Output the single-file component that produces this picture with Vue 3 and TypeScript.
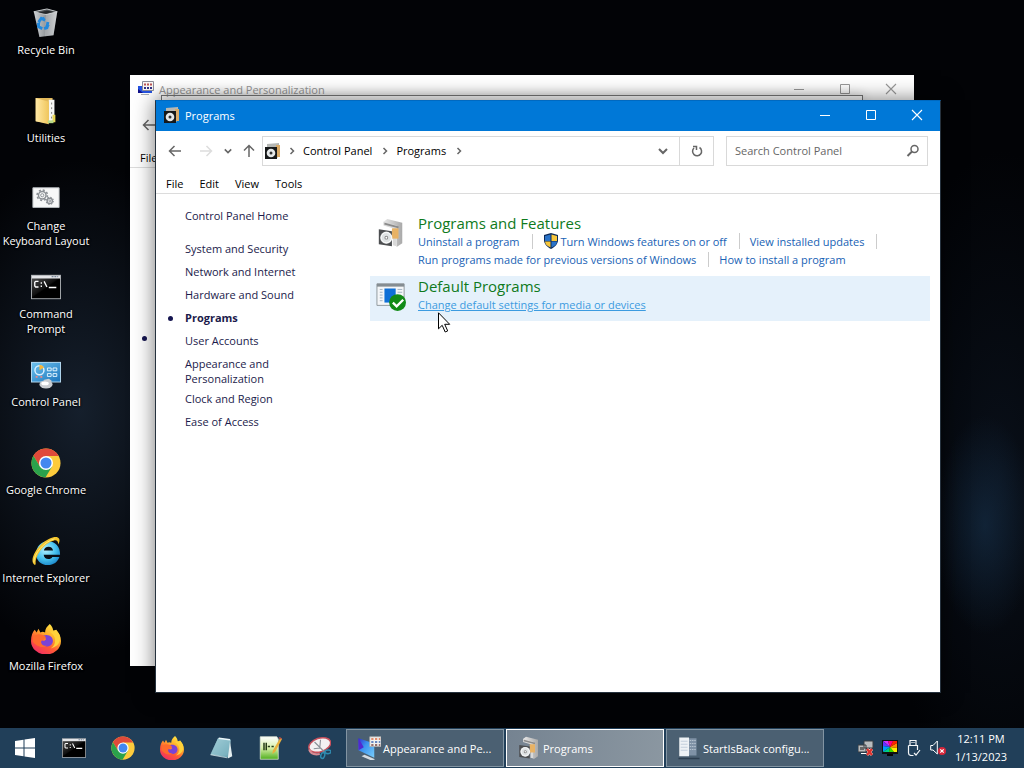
<script setup lang="ts">
import { ref } from 'vue'

interface Shortcut { icon: string; label: string }
interface TaskLink { text: string; shield?: boolean; hot?: boolean }
interface Category { icon: string; title: string; rows: TaskLink[][]; hot?: boolean }
interface SideItem { text: string; current?: boolean; wide?: boolean }

const shortcuts: Shortcut[] = [
  { icon: 'bin', label: 'Recycle Bin' },
  { icon: 'folder', label: 'Utilities' },
  { icon: 'gears', label: 'Change\nKeyboard Layout' },
  { icon: 'cmd', label: 'Command\nPrompt' },
  { icon: 'panel', label: 'Control Panel' },
  { icon: 'chrome', label: 'Google Chrome' },
  { icon: 'ie', label: 'Internet Explorer' },
  { icon: 'firefox', label: 'Mozilla Firefox' },
]

const menus: string[] = ['File', 'Edit', 'View', 'Tools']

const sideItems: SideItem[] = [
  { text: 'System and Security' },
  { text: 'Network and Internet' },
  { text: 'Hardware and Sound' },
  { text: 'Programs', current: true },
  { text: 'User Accounts' },
  { text: 'Appearance and Personalization', wide: true },
  { text: 'Clock and Region' },
  { text: 'Ease of Access' },
]

const categories: Category[] = [
  {
    icon: 'box',
    title: 'Programs and Features',
    rows: [
      [
        { text: 'Uninstall a program' },
        { text: 'Turn Windows features on or off', shield: true },
        { text: 'View installed updates' },
      ],
      [
        { text: 'Run programs made for previous versions of Windows' },
        { text: 'How to install a program' },
      ],
    ],
  },
  {
    icon: 'defaults',
    title: 'Default Programs',
    hot: true,
    rows: [[{ text: 'Change default settings for media or devices', hot: true }]],
  },
]

const pinned: Shortcut[] = [
  { icon: 'cmd', label: 'Command Prompt' },
  { icon: 'chrome', label: 'Google Chrome' },
  { icon: 'firefox', label: 'Mozilla Firefox' },
  { icon: 'notepad', label: 'Notepad' },
  { icon: 'npp', label: 'Notepad++' },
  { icon: 'snip', label: 'Snipping Tool' },
]

const tasks: Shortcut[] = [
  { icon: 'personal', label: 'Appearance and Pe...' },
  { icon: 'box', label: 'Programs' },
  { icon: 'server', label: 'StartIsBack configu...' },
]
const activeTask = ref('Programs')

const tray: Shortcut[] = [
  { icon: 'net', label: 'Network' },
  { icon: 'color', label: 'Display' },
  { icon: 'usb', label: 'Safely remove hardware' },
  { icon: 'mute', label: 'Volume' },
]

const query = ref('')
</script>

<template>
  <div class="desktop">
    <svg class="defs" aria-hidden="true">
      <defs>
        <linearGradient id="gBin" x1="0" x2="1"><stop offset="0" stop-color="#cfd2d5" /><stop offset=".55" stop-color="#8e9397" /><stop offset="1" stop-color="#c3c6c9" /></linearGradient>
        <linearGradient id="gFold" x1="0" x2="1"><stop offset="0" stop-color="#ffe9a6" /><stop offset="1" stop-color="#f0c65c" /></linearGradient>
        <linearGradient id="gCmd" x1="0" y1="0" x2="1" y2="1"><stop offset="0" stop-color="#4a4a4a" /><stop offset=".45" stop-color="#111" /><stop offset=".5" stop-color="#000" /></linearGradient>
        <linearGradient id="gPan" x1="0" y1="0" x2="1" y2="1"><stop offset="0" stop-color="#6cc0ec" /><stop offset="1" stop-color="#1d76bd" /></linearGradient>
        <radialGradient id="gIe" cx=".4" cy=".35" r=".7"><stop offset="0" stop-color="#b5f1ff" /><stop offset=".6" stop-color="#45c1ee" /><stop offset="1" stop-color="#1b86c9" /></radialGradient>
        <linearGradient id="gFox" x1=".8" y1="0" x2=".2" y2="1"><stop offset="0" stop-color="#fff04a" /><stop offset=".35" stop-color="#ffb02a" /><stop offset=".65" stop-color="#ff5a35" /><stop offset="1" stop-color="#f02a6a" /></linearGradient>
        <linearGradient id="gNote" x1="0" y1="0" x2="1" y2="1"><stop offset="0" stop-color="#d8eef2" /><stop offset="1" stop-color="#5e9cad" /></linearGradient>
        <linearGradient id="gNpp" x1="0" y1="0" x2="0" y2="1"><stop offset="0" stop-color="#fff" /><stop offset=".5" stop-color="#d7f0a8" /><stop offset="1" stop-color="#4fae1d" /></linearGradient>
        <linearGradient id="gBox" x1="0" x2="1"><stop offset="0" stop-color="#e9e9e9" /><stop offset="1" stop-color="#a9a9a9" /></linearGradient>
        <linearGradient id="gBlue" x1="0" y1="0" x2="1" y2="1"><stop offset="0" stop-color="#2d2fd0" /><stop offset=".4" stop-color="#3c95ef" /><stop offset="1" stop-color="#79cdfb" /></linearGradient>
        <linearGradient id="gRain" x1="0" x2="1"><stop offset="0" stop-color="#f0f" /><stop offset=".2" stop-color="#24f" /><stop offset=".45" stop-color="#0df" /><stop offset=".7" stop-color="#ff0" /><stop offset="1" stop-color="#f00" /></linearGradient>
        <linearGradient id="gRain2" x1="0" y1="0" x2="0" y2="1"><stop offset=".3" stop-color="#0c0" stop-opacity="0" /><stop offset="1" stop-color="#0c2" /></linearGradient>
      </defs>
      <symbol id="bin" viewBox="0 0 32 32">
        <path d="M3 4l14-3 11 3-4 25-15 2z" fill="url(#gBin)" />
        <path d="M3 4l14-3 11 3-12 3z" fill="#4b4f52" stroke="#c9ccce" />
        <path d="M8 5l9-2 7 1-8 2z" fill="#25282a" />
        <path d="M16 7l-1 23 9-1 4-25z" fill="#fff" opacity=".22" />
        <g fill="none" stroke="#2389dd" stroke-width="3"><path d="M8 15l3-4 4 2M18 15l-1 6-3 1M12 22l-4-2v-3" /></g>
        <path d="M10 12l4-3 1 5zM15 19l5-1-3 5zM6 16l4-1-1 5z" fill="#2389dd" />
      </symbol>
      <symbol id="folder" viewBox="0 0 32 32">
        <path d="M5 2h18v26H12l-7-1z" fill="#e2b95a" />
        <path d="M19 4h6v22l-6 1z" fill="#f5f6f4" />
        <path d="M22 7v17" stroke="#777" stroke-dasharray="2 3" />
        <path d="M5 2l14 4v24L5 27z" fill="url(#gFold)" />
        <path d="M23 20h3v8h-3z" fill="#e9d654" /><path d="M18 26h6v3h-6z" fill="#b7d987" />
      </symbol>
      <symbol id="gears" viewBox="0 0 32 32">
        <path d="M2 4h28v21H2z" fill="#f7f8f8" stroke="#b9bdc0" />
        <g fill="none" stroke="#8b9095"><circle cx="12" cy="12" r="4" stroke-width="1.500" /><circle cx="12" cy="12" r="5.500" stroke-width="1.600" stroke-dasharray="2.200 2.100" /><circle cx="12" cy="12" r="1.700" /><circle cx="20" cy="18" r="2.800" stroke-width="1.500" /><circle cx="20" cy="18" r="3.800" stroke-width="1.200" stroke-dasharray="1.500 1.500" /><circle cx="20" cy="18" r="1" /></g>
      </symbol>
      <symbol id="cmd" viewBox="0 0 32 32">
        <path d="M0 3h32v26H0z" fill="#a9adb0" /><path d="M1 4h30v3H1z" fill="#e4e5e8" />
        <path d="M22 5h2M25 5h2M28 5h1" stroke="#53657c" /><path d="M1 7h30v21H1z" fill="url(#gCmd)" />
        <path d="M8 10H5l-1 1v4l1 1h3M11 11v1.500M11 14.500V16M14 10l3 6M19 16.500h8" fill="none" stroke="#fff" stroke-width="1.400" />
      </symbol>
      <symbol id="panel" viewBox="0 0 32 32">
        <path d="M0 2h32v22H0z" fill="#b6d8ee" /><path d="M1 3h30v20H1z" fill="url(#gPan)" />
        <circle cx="9" cy="11" r="4.800" fill="none" stroke="#d8f0ff" stroke-width="1.600" /><path d="M9 11V5a6 6 0 0 1 5 3z" fill="#f6b73c" />
        <g fill="none" stroke="#e7f6ff"><path d="M17.500 8.500h4v3h-4zM23.500 8.500h4v3h-4zM17.500 14.500h4v3h-4zM23.500 14.500h4v3h-4z" /></g>
        <path d="M5 18h2M10 18h2" stroke="#e88" stroke-width="2" />
        <path d="M14 21l5-1 3 2-1 3h-7z" fill="#c9ced2" /><ellipse cx="16" cy="26" rx="7" ry="4.500" fill="#c9ccd0" /><ellipse cx="15" cy="25" rx="4" ry="2" fill="#fff" />
      </symbol>
      <symbol id="chrome" viewBox="0 0 32 32">
        <circle cx="16" cy="16" r="15.500" fill="#fdcb3c" />
        <path d="M16 8.500H29.500A15.500 15.500 0 0 0 2.600 8.200L9.500 19.800 16 16z" fill="#e04a3a" />
        <path d="M2.600 8.200A15.500 15.500 0 0 0 15.400 31.500L22.500 19.800 16 16 9.500 19.800z" fill="#2ba24c" />
        <circle cx="16" cy="16" r="7.500" fill="#fff" /><circle cx="16" cy="16" r="5.900" fill="#4387f0" />
      </symbol>
      <symbol id="ie" viewBox="0 0 32 32">
        <path d="M31 20H13.500c.3 3 2.300 4.500 5 4.500 2 0 3.500-.8 4.300-2.200h7.500C28.500 27.500 24 31 18 31 10.500 31 5.500 26 5.500 18.800 5.500 11.500 10.500 5.500 18 5.500c8 0 13.300 6 13 14.500zM23.500 15.500c-.3-2.500-2-4-4.800-4-2.700 0-4.600 1.500-5 4z" fill="url(#gIe)" fill-rule="evenodd" />
        <path d="M4 31C-2 27 4 15 12 8 19 2 28-1 30 3c1 2 0 4-1 6 0-4-2-5-5-4C15 7 4 20 5 30z" fill="#f4c52c" /><path d="M3 28C3 19 14 6 25 3" fill="none" stroke="#fff19a" stroke-width=".8" />
      </symbol>
      <symbol id="firefox" viewBox="0 0 32 32">
        <path d="M20 0c4 4 3 6 4 7l3-1c3 4 5 7 5 12A16 14.500 0 0 1 0 18c0-6 2-10 4-12l2 3 2-4 2 4c2-1 3-1 5 0 0-4 2-6 5-9z" fill="url(#gFox)" />
        <path d="M20 8c7 4 8 14 1 18 6-1 10-5 10-11 0-3-1-5-4-8l-3 1z" fill="#ffd23a" />
        <path d="M11 14c3-3 8-3 11 0 3 4 1 9-4 10-5 0-9-3-8-7l4 1c2-1 3-2 1-3z" fill="#7a43d6" /><path d="M2 13l6-2c3 0 6 1 8 3-1 2-4 2-5 4-1 3 2 6 6 5-5 4-12 0-15-4z" fill="#ff6b2d" />
      </symbol>
      <symbol id="notepad" viewBox="0 0 32 32">
        <path d="M12 3l17 2-3 24L2 25z" fill="url(#gNote)" /><path d="M12 3l17 2-5 21-22-2z" fill="#7fb7c4" opacity=".6" /><path d="M28 7l3 20-6 3z" fill="#e3eef0" /><path d="M13 3l15 2" stroke="#edf8fa" stroke-width="2" /><path d="M2 25l22 4" stroke="#d6e6e9" />
      </symbol>
      <symbol id="npp" viewBox="0 0 32 32">
        <path d="M3 1h22l2 3v27H3z" fill="url(#gNpp)" stroke="#dfe8d6" /><path d="M8 9v10M11 9v10M13 14h3M18 14h3" stroke="#263c18" stroke-width="2" /><path d="M30 2l2 2-9 17-4 3 1-5z" fill="#e9b13c" /><path d="M28 2l3 2" stroke="#c94a4a" stroke-width="2" />
      </symbol>
      <symbol id="snip" viewBox="0 0 32 32">
        <ellipse cx="17" cy="12" rx="15" ry="9" transform="rotate(-18 17 12)" fill="#f3f1f2" stroke="#c8505c" stroke-width="2" /><path d="M3 18c2 7 8 7 14 6" fill="none" stroke="#d88b93" stroke-width="3" />
        <path d="M10 8l14 14M18 5l-1 11-8 1" stroke="#8a9097" stroke-width="1.500" fill="none" /><g fill="none" stroke="#2f8bb0" stroke-width="2"><ellipse cx="21" cy="26" rx="2.500" ry="4" transform="rotate(20 21 26)" /><ellipse cx="28" cy="21" rx="4" ry="2.500" /></g>
      </symbol>
      <symbol id="box" viewBox="0 0 32 32">
        <path d="M8 4l4-3 16 4v22l-6 4V11L8 7z" fill="url(#gBox)" /><path d="M8 4l14 4v22l-4-1V11L8 8z" fill="#d9d9d9" /><path d="M9 6l15 4" stroke="#8b8b8b" stroke-width="2" /><path d="M17 11h7v11h-7z" fill="#e8b265" />
        <path d="M3 12l14 2v16L3 28z" fill="#4c4e50" /><circle cx="11" cy="21" r="6.500" fill="#dfe3e4" /><circle cx="11" cy="21" r="5.500" fill="none" stroke="#fff" /><circle cx="11" cy="21" r="2" fill="#888" /><circle cx="11" cy="21" r="1" fill="#fff" />
      </symbol>
      <symbol id="boxSmall" viewBox="0 0 16 16">
        <path d="M2 1l12-1v13l-3 3V4H2z" fill="#b5b7b4" /><path d="M11 2h4v12h-4z" fill="#d9aa68" /><path d="M0 4h12v12H0z" fill="#161819" /><circle cx="6" cy="10" r="4.300" fill="#e5e8e9" /><circle cx="6" cy="10" r="1.500" fill="#333" />
      </symbol>
      <symbol id="defaults" viewBox="0 0 32 32">
        <path d="M1 3h29v23H1z" fill="#f4f6f8" stroke="#8e969b" /><path d="M1 3h29v3H1z" fill="#858d92" /><path d="M4 9h3M4 12h3M4 15h3M4 18h3M4 21h3M23 9h5M23 12h5" stroke="#9eb0bf" /><path d="M9 8h12v15H9z" fill="#0f70d7" />
        <circle cx="23" cy="23" r="9" fill="#128b17" /><path d="M18 23l4 4 7-7" fill="none" stroke="#fff" stroke-width="2.500" />
      </symbol>
      <symbol id="personal" viewBox="0 0 32 32">
        <path d="M2 3l21 7v19L2 19z" fill="url(#gBlue)" /><path d="M2 3l7 12-7 4z" fill="#5228d0" /><path d="M10 25l14 6-4 2-14-6z" fill="#d5dce2" /><path d="M17 1h15v13H17z" fill="#f2f2ef" stroke="#aaa" /><path d="M19 4h3M24 4h3M29 4h2" stroke="#e06c45" stroke-width="2" /><path d="M19 8h3M24 8h3M29 8h2" stroke="#3b66b3" stroke-width="2" /><path d="M19 12h3M24 12h3M29 12h2" stroke="#744" stroke-width="2" />
      </symbol>
      <symbol id="personalSmall" viewBox="0 0 16 16">
        <path d="M0 5h14v7H0z" fill="#2452e0" /><path d="M0 8l5 4H0z" fill="#10108a" /><path d="M3 13h8v1H3z" fill="#a7adb5" /><path d="M4.500.5h11v9h-11z" fill="#faf8f5" stroke="#8d8d9a" /><path d="M6 3.500h2M9 3.500h2M12 3.500h2" stroke="#b55" stroke-width="2" /><path d="M6 7h2M9 7h2M12 7h2" stroke="#338" stroke-width="2" />
      </symbol>
      <symbol id="server" viewBox="0 0 32 32">
        <path d="M14 3h12v23H14z" fill="#7f92a6" /><path d="M17 6h8M17 10h8M17 14h8M17 18h8" stroke="#c6d1dc" stroke-dasharray="2 1" /><path d="M3 2h13v25H3z" fill="#eef2f5" /><path d="M5 7h9M5 11h9M5 15h9M5 19h9" stroke="#b4c3d1" /><path d="M2 29h28v2H2z" fill="#2d3f50" />
      </symbol>
      <symbol id="shield" viewBox="0 0 16 16">
        <path d="M8 0l7 2v5c0 4-3 7-7 9-4-2-7-5-7-9V2z" fill="#0d2a57" /><path d="M7.500 1.500V8H2V3z" fill="#2a73c9" /><path d="M8.500 1.500L14 3v5H8.500z" fill="#f7c63b" /><path d="M2 8.500h5.500v6C4 13 2 11 2 8.500z" fill="#f7c63b" /><path d="M14 8.500H8.500v6C12 13 14 11 14 8.500z" fill="#2a73c9" />
      </symbol>
      <symbol id="net" viewBox="0 0 16 16">
        <path d="M6 1h9v7H6zM0 5h8v7H0z" fill="#b9bcbe" stroke="#3a3f43" /><path d="M2 7h4v3H2z" fill="#666" /><path d="M3 13h5v1H3zM10 9h2v2" fill="#fff" /><path d="M9 9l5 6M14 9l-5 6" stroke="#f6b7a9" stroke-width="3" /><path d="M9 9l5 6M14 9l-5 6" stroke="#dd2f2b" stroke-width="2" />
      </symbol>
      <symbol id="color" viewBox="0 0 16 16">
        <path d="M0 0h16v14H0z" fill="#111" /><path d="M8 7L1 1h5z" fill="#c3f" /><path d="M8 7L1 1v5z" fill="#63f" /><path d="M8 7L1 6v6z" fill="#09f" /><path d="M8 7l-7 5h6z" fill="#0c8" /><path d="M8 7l-1 5h5z" fill="#3d0" /><path d="M8 7l4 5h3V8z" fill="#fe0" /><path d="M8 7l7 1V3z" fill="#f80" /><path d="M8 7l7-4V1h-4z" fill="#f20" /><path d="M8 7L6 1h5z" fill="#f08" /><path d="M5 14h6v2H5z" fill="#050505" />
      </symbol>
      <symbol id="usb" viewBox="0 0 16 16"><path d="M4 5V.5h6V5M6 2v1M8 2v1M2.500 5.500h9V10M2.500 5.500V13c0 2 1 2.500 3 2.500h2M8 13l2 2 4-5" fill="none" stroke="#f5f7f8" stroke-width="1.200" /></symbol>
      <symbol id="mute" viewBox="0 0 16 16"><path d="M.7 5.500H3L7.300 1v13L3 10H.7z" fill="none" stroke="#fff" /><circle cx="12" cy="11" r="4" fill="#d7263a" /><path d="M10.300 9.300l3.400 3.400M13.700 9.300l-3.400 3.400" stroke="#fff" stroke-width="1.200" /></symbol>
      <symbol id="back" viewBox="0 0 14 14"><path d="M13 7H1.500M6.500 2l-5 5 5 5" fill="none" stroke="currentColor" stroke-width="1.500" /></symbol>
      <symbol id="chev" viewBox="0 0 8 8"><path d="M2.500 1l3 3-3 3" fill="none" stroke="currentColor" stroke-width="1.500" /></symbol>
      <symbol id="down" viewBox="0 0 10 10"><path d="M1 3l4 4 4-4" fill="none" stroke="currentColor" stroke-width="2" /></symbol>
      <symbol id="min" viewBox="0 0 12 12"><path d="M1 6.500h10" stroke="currentColor" /></symbol>
      <symbol id="max" viewBox="0 0 12 12"><path d="M1.500 1.500h9v9h-9z" fill="none" stroke="currentColor" /></symbol>
      <symbol id="close" viewBox="0 0 12 12"><path d="M1 1l10 10M11 1L1 11" stroke="currentColor" stroke-width="1.100" /></symbol>
    </svg>

    <main class="workspace">
      <nav class="shortcuts" aria-label="Desktop">
        <button v-for="s in shortcuts" :key="s.label" class="shortcut" type="button">
          <svg class="ico-30"><use :href="'#' + s.icon" /></svg>
          <span>{{ s.label }}</span>
        </button>
      </nav>

      <section class="window rear" aria-label="Appearance and Personalization">
        <header class="titlebar">
          <svg class="ico-16"><use href="#personalSmall" /></svg>
          <h2>Appearance and Personalization</h2>
          <div class="controls">
            <button type="button" aria-label="Minimize"><svg class="ico-12"><use href="#min" /></svg></button>
            <button type="button" aria-label="Maximize"><svg class="ico-12"><use href="#max" /></svg></button>
            <button type="button" aria-label="Close"><svg class="ico-12"><use href="#close" /></svg></button>
          </div>
        </header>
        <div class="toolbar">
          <button class="nav back" type="button" aria-label="Back"><svg class="ico-14"><use href="#back" /></svg></button>
        </div>
        <div class="menubar"><button type="button">File</button></div>
        <span class="dot rear-dot"></span>
      </section>
      <div class="outline"></div>

      <section class="window front" aria-label="Programs">
        <header class="titlebar">
          <svg class="ico-16"><use href="#boxSmall" /></svg>
          <h1>Programs</h1>
          <div class="controls">
            <button type="button" aria-label="Minimize"><svg class="ico-12"><use href="#min" /></svg></button>
            <button type="button" aria-label="Maximize"><svg class="ico-12"><use href="#max" /></svg></button>
            <button type="button" aria-label="Close"><svg class="ico-12"><use href="#close" /></svg></button>
          </div>
        </header>
        <div class="toolbar">
          <button class="nav back" type="button" aria-label="Back"><svg class="ico-14"><use href="#back" /></svg></button>
          <button class="nav forward" type="button" aria-label="Forward"><svg class="ico-14 flip"><use href="#back" /></svg></button>
          <button class="nav recent" type="button" aria-label="Recent locations"><svg class="ico-8"><use href="#down" /></svg></button>
          <button class="nav up" type="button" aria-label="Up"><svg class="ico-14 turn"><use href="#back" /></svg></button>
          <div class="address">
            <svg class="ico-16"><use href="#boxSmall" /></svg>
            <svg class="ico-8"><use href="#chev" /></svg>
            <a href="#">Control Panel</a>
            <svg class="ico-8"><use href="#chev" /></svg>
            <a href="#">Programs</a>
            <svg class="ico-8"><use href="#chev" /></svg>
            <button class="drop" type="button" aria-label="Previous locations"><svg class="ico-10"><use href="#down" /></svg></button>
            <button class="refresh" type="button" aria-label="Refresh">
              <svg class="ico-14" viewBox="0 0 14 14"><path d="M9.500 3.500A4.500 4.500 0 1 1 4 4M3 2.500h3.500V6" fill="none" stroke="currentColor" stroke-width="1.500" /></svg>
            </button>
          </div>
          <div class="search">
            <input v-model="query" type="search" placeholder="Search Control Panel" aria-label="Search Control Panel" />
            <svg class="ico-14" viewBox="0 0 14 14"><circle cx="8.500" cy="5" r="3.500" fill="none" stroke="currentColor" stroke-width="1.500" /><path d="M6 7.500L1.500 12" stroke="currentColor" stroke-width="2" /></svg>
          </div>
        </div>
        <div class="menubar">
          <button v-for="m in menus" :key="m" type="button">{{ m }}</button>
        </div>
        <div class="body">
          <nav class="sidebar" aria-label="Control Panel">
            <a class="home" href="#">Control Panel Home</a>
            <ul>
              <li v-for="i in sideItems" :key="i.text" :class="{ current: i.current, wide: i.wide }">
                <span v-if="i.current" class="dot"></span><a href="#">{{ i.text }}</a>
              </li>
            </ul>
          </nav>
          <div class="categories">
            <article v-for="c in categories" :key="c.title" class="category" :class="{ hot: c.hot }">
              <svg class="ico-30"><use :href="'#' + c.icon" /></svg>
              <div class="details">
                <h2><a href="#">{{ c.title }}</a></h2>
                <div v-for="(row, r) in c.rows" :key="r" class="links">
                  <a v-for="l in row" :key="l.text" href="#" :class="{ hot: l.hot }"><svg v-if="l.shield" class="ico-16"><use href="#shield" /></svg>{{ l.text }}</a>
                </div>
              </div>
              <svg v-if="c.hot" class="pointer" viewBox="0 0 13 21"><path d="M.5.8v16l3.700-3.500 3 6.700 2.500-1.100-3-6.600h5z" fill="#fff" stroke="#000" /></svg>
            </article>
          </div>
        </div>
      </section>
    </main>

    <footer class="taskbar">
      <button class="start" type="button" aria-label="Start">
        <svg class="ico-20" viewBox="0 0 20 20"><path d="M0 3l8.500-1.200v7.700H0zM9.500 1.600L20 0v9.500H9.500zM0 10.500h8.500v7.700L0 17zM9.500 10.500H20V20L9.500 18.400z" fill="#fff" /></svg>
      </button>
      <button v-for="p in pinned" :key="p.icon" class="pin" type="button" :aria-label="p.label"><svg class="ico-24"><use :href="'#' + p.icon" /></svg></button>
      <div class="tasks">
        <button v-for="t in tasks" :key="t.label" class="task" :class="{ active: t.label === activeTask }" type="button" @click="activeTask = t.label">
          <svg class="ico-24"><use :href="'#' + t.icon" /></svg><span>{{ t.label }}</span>
        </button>
      </div>
      <div class="tray">
        <button v-for="t in tray" :key="t.icon" type="button" :aria-label="t.label"><svg class="ico-16"><use :href="'#' + t.icon" /></svg></button>
      </div>
      <time class="clock" datetime="2023-01-13T12:11"><span>12:11 PM</span><span>1/13/2023</span></time>
    </footer>
  </div>
</template>

<style>
body { margin: 0; overflow: hidden; }
</style>

<style scoped>
.desktop {
  --font: "Open Sans", "Noto Sans", sans-serif;
  display: flex;
  flex-direction: column;
  height: 100vh;
  overflow: hidden;
  background:
    radial-gradient(ellipse 50px 110px at 985px 525px, rgba(24, 52, 80, .55), transparent 100%),
    radial-gradient(ellipse 120px 330px at 1000px 480px, rgba(14, 24, 38, .6), transparent 100%),
    radial-gradient(ellipse 150px 250px at 80px 410px, #151f2c, transparent 100%),
    #020306;
  font: 11px/15px var(--font);
  color: #000;
}
.desktop *, .desktop *::before { box-sizing: border-box; }
button, input { font: inherit; color: inherit; border: 0; padding: 0; margin: 0; background: none; }
a { color: inherit; text-decoration: none; }
h1, h2, ul { margin: 0; padding: 0; font: inherit; list-style: none; }
svg { display: block; flex: none; overflow: visible; }
.defs { position: absolute; width: 0; height: 0; }
.ico-8 { width: 8px; height: 8px; }
.ico-10 { width: 10px; height: 10px; }
.ico-12 { width: 12px; height: 12px; }
.ico-14 { width: 14px; height: 14px; }
.ico-16 { width: 16px; height: 16px; }
.ico-20 { width: 20px; height: 20px; }
.ico-24 { width: 24px; height: 24px; }
.ico-30 { width: 30px; height: 30px; }
.flip { transform: rotate(180deg); }
.turn { transform: rotate(90deg); }

.workspace { position: relative; flex: 1; min-height: 0; }
.shortcuts { display: grid; grid-auto-rows: 88px; width: 92px; }
.shortcut {
  display: flex;
  flex-direction: column;
  align-items: center;
  justify-content: flex-start;
  gap: 4px;
  padding-top: 8px;
  color: #fff;
  white-space: pre;
  text-shadow: 0 1px 2px #000, 0 0 2px #000;
}

.window {
  position: absolute;
  display: flex;
  flex-direction: column;
  background: #fff;
}
.rear { inset: 75px 110px 62px 130px; }
.front {
  inset: 100px 83px 35px 155px;
  border: 1px solid #26323e;
  border-top-color: #0069c0;
  box-shadow: 0 0 20px rgba(0, 0, 0, .55);
}
.outline {
  position: absolute;
  inset: 95px 161px auto 161px;
  height: 8px;
  border: 1px solid #777;
  border-bottom: 0;
  box-shadow: 0 0 12px rgba(0, 0, 0, .2);
}
.titlebar { display: flex; align-items: center; height: 30px; padding: 0 0 2px 8px; gap: 5px; }
.front .titlebar { background: #0078d7; color: #fff; }
.rear .titlebar { color: #999; }
.controls { display: flex; margin-left: auto; }
.controls button { display: grid; place-items: center; width: 46px; height: 28px; }
.toolbar { display: flex; align-items: center; height: 40px; padding-right: 12px; color: #666; }
.nav { display: grid; place-items: center; height: 30px; }
.back { width: 38px; }
.forward { width: 23px; color: #ddd; }
.recent { width: 22px; }
.up { width: 20px; margin-right: 3px; }
.address, .search { display: flex; align-items: center; height: 30px; border: 1px solid #d9d9d9; }
.address { flex: 1; gap: 7px; padding-left: 2px; }
.address a { padding: 0 2px 2px 0; color: #000; }
.drop { display: grid; place-items: center; width: 32px; height: 28px; margin-left: auto; }
.refresh { display: grid; place-items: center; width: 34px; height: 28px; margin-left: -7px; border-left: 1px solid #d9d9d9; }
.search { width: 202px; margin-left: 12px; padding: 0 7px 0 8px; }
.search input { flex: 1; min-width: 0; padding-bottom: 2px; outline: 0; }
.search input::placeholder { color: #666; opacity: 1; }
.menubar { display: flex; gap: 16px; height: 23px; padding: 2px 0 0 10px; border-bottom: 1px solid #dcdcdc; }
.dot { width: 5px; height: 5px; border-radius: 50%; background: #151550; }
.rear-dot { margin: 168px 0 0 12px; }

.body { display: flex; flex: 1; }
.sidebar { width: 214px; padding: 14px 0 0 29px; color: #1b1b4b; }
.home { display: block; margin-bottom: 18px; }
li { position: relative; width: 110px; margin-bottom: 8px; }
li.wide { margin-bottom: 5px; }
li:not(.wide) { white-space: nowrap; }
li.current { font-weight: 700; }
li .dot { position: absolute; left: -17px; top: 6px; }
.categories { flex: 1; padding: 19px 10px 0 0; }
.category { position: relative; display: flex; gap: 12px; padding: 1px 0 0 6px; margin-bottom: 8px; color: #0b6cc4; }
.category .ico-30 { margin-top: 4px; }
.category.hot { padding-bottom: 8px; background: #e5f1fb; }
.category h2 { font-size: 15px; line-height: 18px; color: #0f7a1c; }
.category .details { white-space: nowrap; }
.links { display: flex; height: 18px; align-items: center; color: #1862b5; }
.links a { display: flex; align-items: center; gap: 2px; }
.links a:not(:last-child), .links a:nth-child(3) { padding-right: 12px; border-right: 1px solid #ccc; }
.links a + a { padding-left: 10px; }
.links a.hot { color: #3c9be0; text-decoration: underline; }
.pointer { position: absolute; left: 68px; top: 36px; width: 13px; height: 21px; }

.taskbar { display: flex; align-items: center; height: 40px; background: #213f59; color: #fff; }
.start { display: grid; place-items: center; width: 49px; height: 40px; }
.pin { display: grid; place-items: center; width: 49px; height: 40px; }
.tasks { display: flex; flex: 1; gap: 2px; min-width: 0; padding-left: 3px; }
.task {
  display: flex;
  align-items: center;
  flex: 0 1 158px;
  min-width: 0;
  gap: 2px;
  height: 38px;
  padding-left: 10px;
  border: 1px solid #8294a2;
  background: #4b6072;
  white-space: nowrap;
}
.task.active { border: 1px solid #fff; background: linear-gradient(100deg, #758391, #8b97a1); }
.tray { display: flex; gap: 8px; }
.tray button { display: block; }
.clock { display: flex; flex-direction: column; align-items: center; width: 78px; padding-right: 8px; line-height: 18px; }
</style>
